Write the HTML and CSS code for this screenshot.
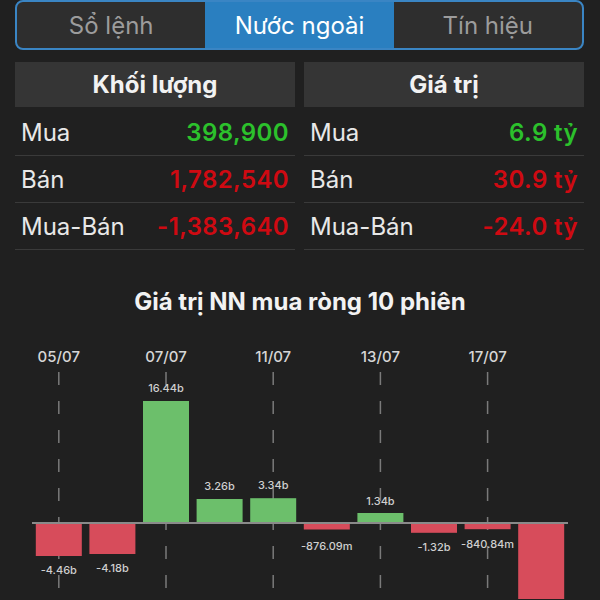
FILE: index.html
```html
<!DOCTYPE html>
<html lang="vi">
<head>
  <meta charset="UTF-8">
  <meta name="viewport" content="width=device-width, initial-scale=1.0">
  <title>Nước ngoài</title>
  <link rel="stylesheet" href="styles.css">
</head>
<body>
  <!-- Segmented tabs -->
  <div class="tabs">
    <div class="tab">Sổ lệnh</div>
    <div class="tab active">Nước ngoài</div>
    <div class="tab">Tín hiệu</div>
  </div>

  <!-- Summary tables -->
  <div class="stats">
    <div class="panel">
      <div class="panel-head">Khối lượng</div>
      <div class="row"><span>Mua</span><span class="up">398,900</span></div>
      <div class="row"><span>Bán</span><span class="down">1,782,540</span></div>
      <div class="row"><span>Mua-Bán</span><span class="down">-1,383,640</span></div>
    </div>
    <div class="panel">
      <div class="panel-head">Giá trị</div>
      <div class="row"><span>Mua</span><span class="up">6.9 tỷ</span></div>
      <div class="row"><span>Bán</span><span class="down">30.9 tỷ</span></div>
      <div class="row"><span>Mua-Bán</span><span class="down">-24.0 tỷ</span></div>
    </div>
  </div>

  <!-- Chart -->
  <h2 class="chart-title">Giá trị NN mua ròng 10 phiên</h2>
  <svg class="chart" width="600" height="260" viewBox="0 0 600 260">
    <g class="grid">
      <line x1="58.8" y1="33" x2="58.8" y2="260"/>
      <line x1="166" y1="33" x2="166" y2="260"/>
      <line x1="273.2" y1="33" x2="273.2" y2="260"/>
      <line x1="380.4" y1="33" x2="380.4" y2="260"/>
      <line x1="487.6" y1="33" x2="487.6" y2="260"/>
    </g>
    <g class="dates">
      <text x="58.8" y="23">05/07</text>
      <text x="166" y="23">07/07</text>
      <text x="273.2" y="23">11/07</text>
      <text x="380.4" y="23">13/07</text>
      <text x="487.6" y="23">17/07</text>
    </g>
    <g class="bars">
      <rect class="neg" x="35.8" y="184" width="46" height="33"/>
      <rect class="neg" x="89.4" y="184" width="46" height="31"/>
      <rect class="pos" x="143" y="62" width="46" height="122"/>
      <rect class="pos" x="196.6" y="160" width="46" height="24"/>
      <rect class="pos" x="250.2" y="159.2" width="46" height="24.8"/>
      <rect class="neg" x="303.8" y="184" width="46" height="6.5"/>
      <rect class="pos" x="357.4" y="174" width="46" height="10"/>
      <rect class="neg" x="411" y="184" width="46" height="9.8"/>
      <rect class="neg" x="464.6" y="184" width="46" height="6.2"/>
      <rect class="neg" x="518.2" y="184" width="46" height="178"/>
    </g>
    <line class="axis" x1="32" y1="184" x2="568" y2="184"/>
    <g class="values">
      <text x="58.8" y="235">-4.46b</text>
      <text x="112.4" y="233">-4.18b</text>
      <text x="166" y="53">16.44b</text>
      <text x="219.6" y="151">3.26b</text>
      <text x="273.2" y="150">3.34b</text>
      <text x="326.8" y="211">-876.09m</text>
      <text x="380.4" y="166">1.34b</text>
      <text x="434" y="212">-1.32b</text>
      <text x="487.6" y="209">-840.84m</text>
    </g>
  </svg>
</body>
</html>
```

FILE: styles.css
```css
body {
  margin: 0;
  background-color: #202020;
  color: #ececec;
  font-family: Inter, "Noto Sans", sans-serif;
  overflow: hidden;
  height: 600px;
}
.tabs {
  display: flex;
  height: 46px;
  margin: 0 16px 0 15px;
  border: 2px solid #3a85c4;
  border-radius: 8px;
  overflow: hidden;
  background-color: #2e2e2e;
}
.tab {
  flex: 1;
  display: flex;
  align-items: center;
  justify-content: center;
  font-size: 24px;
  color: #9c9c9c;
}
.tab + .tab {
  border-left: 1px solid #252525;
}
.tab.active {
  background-color: #2a7fc0;
  color: #ffffff;
  border-left: none;
}
.tab.active + .tab {
  border-left: none;
}
.stats {
  display: grid;
  grid-template-columns: 1fr 1fr;
  gap: 9px;
  margin: 12px 16px 0 15px;
}
.panel-head {
  height: 45px;
  display: flex;
  align-items: center;
  justify-content: center;
  background-color: #353535;
  font-size: 24px;
  font-weight: 700;
  color: #f2f2f2;
  margin-bottom: 2px;
}
.row {
  height: 46px;
  border-bottom: 1px solid #3a3a3a;
  display: flex;
  align-items: center;
  justify-content: space-between;
  padding: 0 6px;
  font-size: 24px;
  color: #e8e8e8;
}
.row .up,
.row .down {
  font-weight: 600;
  letter-spacing: 0.4px;
}
.row .up {
  color: #2cc12c;
}
.row .down {
  color: #cf0a12;
}
.chart-title {
  margin: 37px 0 0;
  height: 30px;
  line-height: 30px;
  text-align: center;
  font-size: 24px;
  font-weight: 700;
  color: #f2f2f2;
}
.chart {
  display: block;
  margin-top: 22px;
}
.chart .grid line {
  stroke: #7a7a7a;
  stroke-width: 1.5;
  stroke-dasharray: 13 16;
}
.chart .dates text {
  fill: #d6d6d6;
  font-size: 15px;
  font-weight: 500;
  text-anchor: middle;
}
.chart .pos {
  fill: #6cbf6b;
}
.chart .neg {
  fill: #d74c5b;
}
.chart .axis {
  stroke: #8a8a8a;
  stroke-width: 2;
}
.chart .values text {
  fill: #cfcfcf;
  font-size: 11px;
  font-weight: 500;
  text-anchor: middle;
}
```
